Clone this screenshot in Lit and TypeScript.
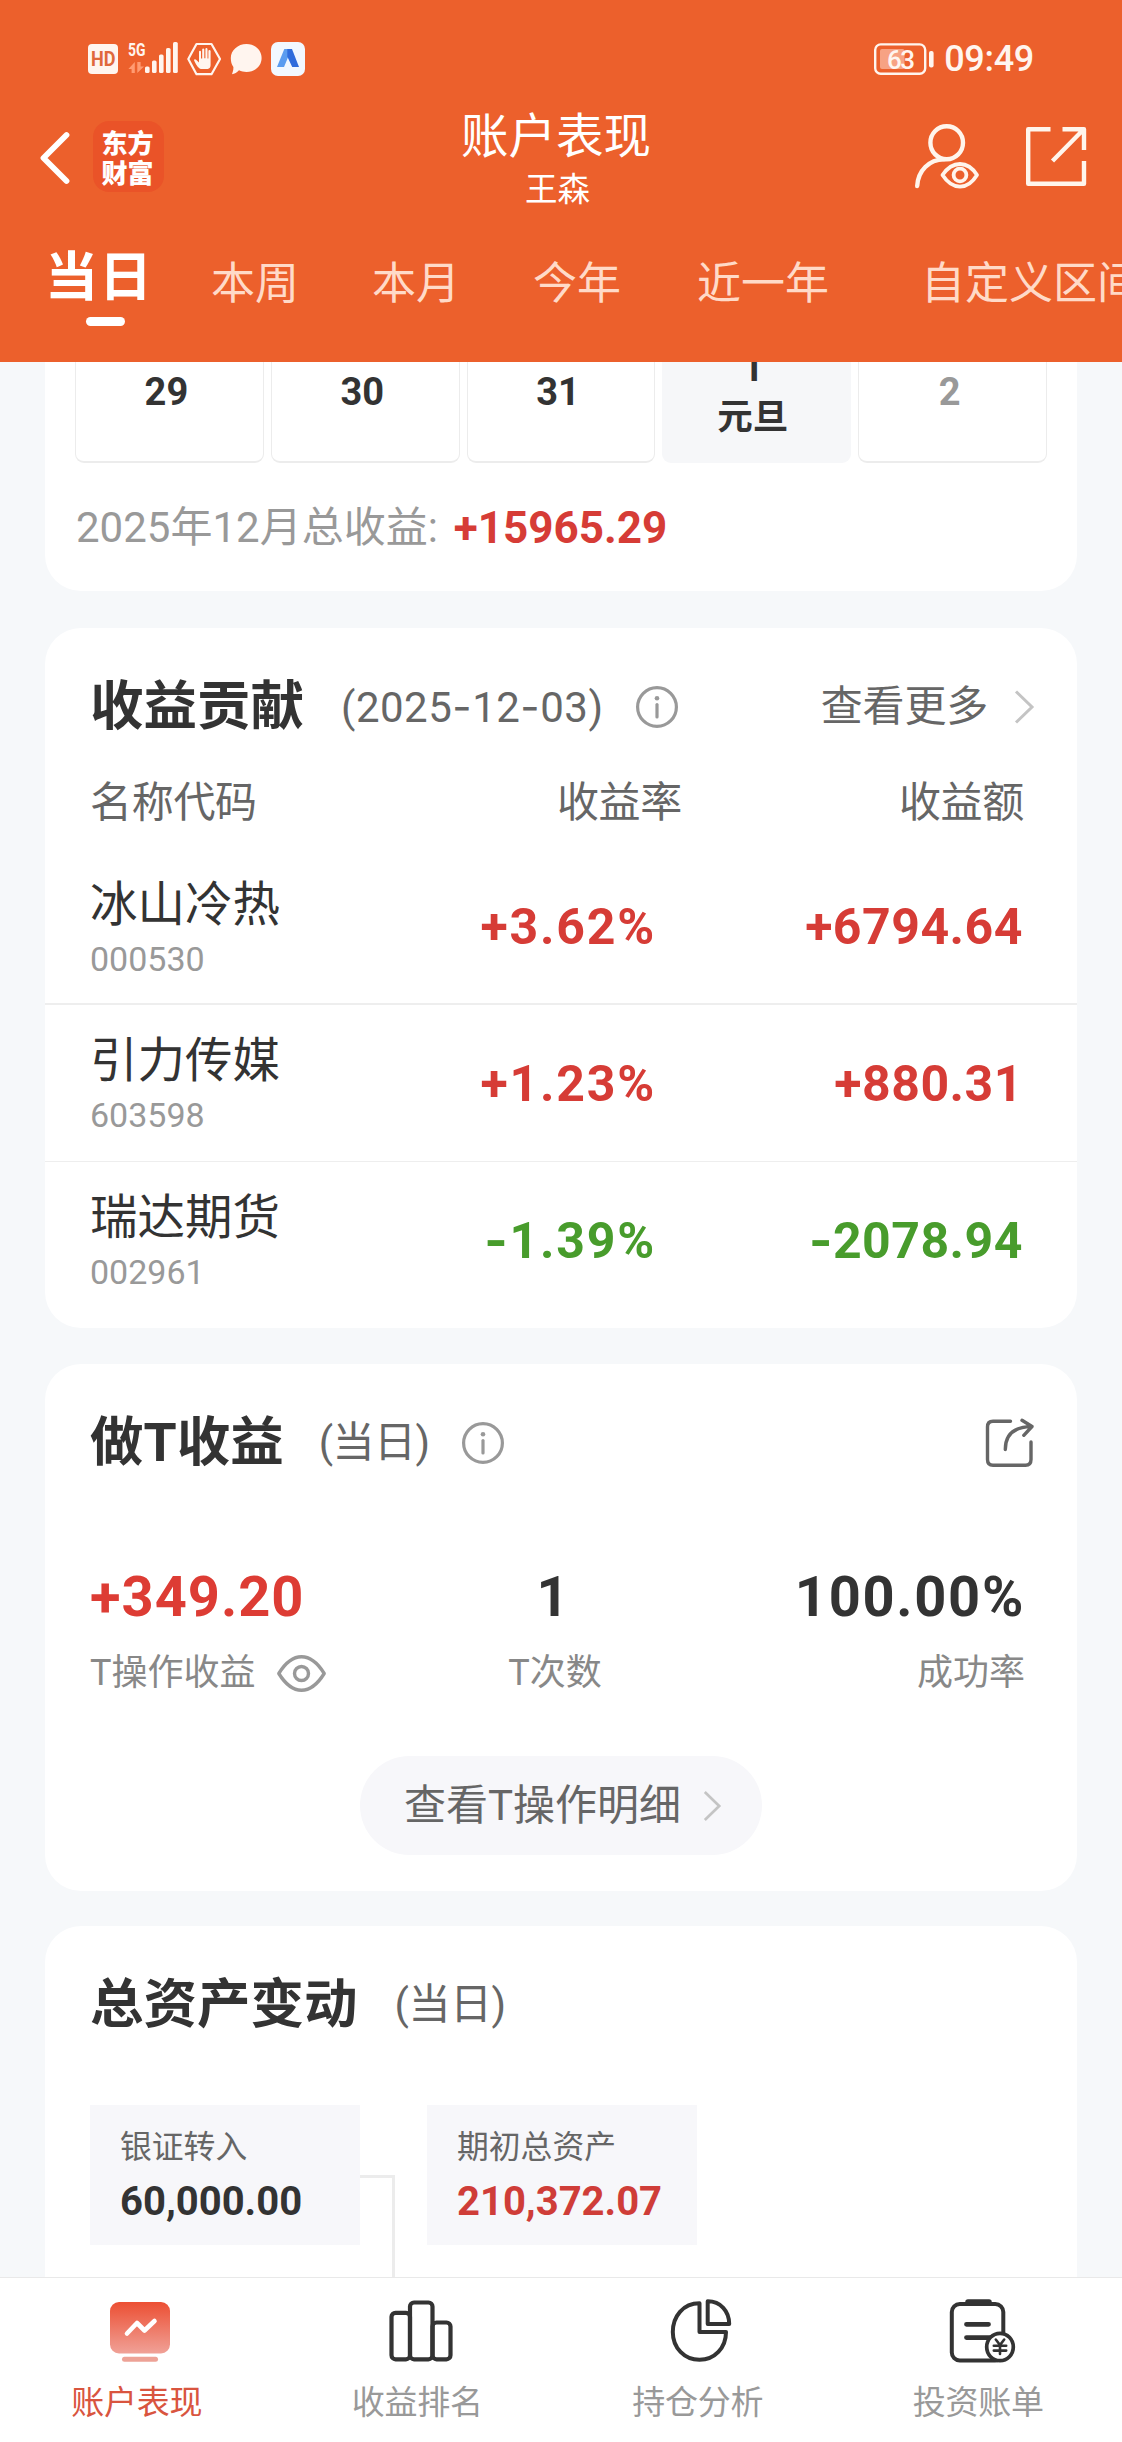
import { LitElement, html, svg, css } from "lit";
import { customElement } from "lit/decorators.js";
import { classMap } from "lit/directives/class-map.js";

const shared = css`
  * { box-sizing: border-box; }
  svg { display: block; flex: none; overflow: visible; }
  .hy { font-family: Inter, sans-serif; }
`;

const infoIcon = html`<svg width="42" height="42" viewBox="0 0 42 42" fill="none" stroke="#999" stroke-width="3.2">
  <circle cx="21" cy="21" r="19.4"></circle>
  <path d="M21 18.5V31" stroke-linecap="round"></path>
  <circle cx="21" cy="12.2" r="2.3" fill="#999" stroke="none"></circle>
</svg>`;

const chevron = html`<svg width="20" height="34" viewBox="0 0 20 34" fill="none" stroke="#c4c4c4" stroke-width="3">
  <path d="M2 1.5L18 17L2 32.5"></path>
</svg>`;

// Hyphens are set in a face whose dash is as wide as the figures around it.
const dashed = (s: string) =>
  s.split(/(-)/).map((p) => (p === "-" ? html`<span class="hy">-</span>` : p));

@customElement("status-bar")
class StatusBar extends LitElement {
  static styles = [shared, css`
    :host { display: flex; align-items: center; height: 118px; padding: 0 88px; font-family: Roboto, sans-serif; color: #fff5ef; }
    .left, .right { display: flex; align-items: center; }
    .right { margin-left: auto; }
    .time { font-size: 36px; line-height: 40px; font-weight: 500; letter-spacing: -0.3px; margin-left: 10px; }
    .t { font-family: Roboto, sans-serif; }
  `];
  render() {
    return html`
      <div class="left">
        <svg width="218" height="40" viewBox="88 39 218 40">
          <rect x="88" y="44" width="30" height="30" rx="4" fill="#fff5ef"></rect>
          <text class="t" x="91" y="66.2" font-size="20" font-weight="700" textLength="24.5" lengthAdjust="spacingAndGlyphs" fill="#e0683c">HD</text>
          <text class="t" x="128" y="56" font-size="18.5" font-weight="700" textLength="17.5" lengthAdjust="spacingAndGlyphs" fill="#fff5ef">5G</text>
          <path d="M134.8 73V62L128.4 69H131.6V73ZM137.3 62V73L144 66.4H140.6V62Z" fill="#ff9b72"></path>
          <g fill="#fff5ef">
            <rect x="145" y="66.5" width="4.6" height="6.5" rx="1.6"></rect>
            <rect x="152" y="60.5" width="4.6" height="12.5" rx="1.6"></rect>
            <rect x="159" y="54.5" width="4.6" height="18.5" rx="1.6"></rect>
            <rect x="166" y="48" width="4.6" height="25" rx="1.6"></rect>
            <rect x="173" y="42" width="4.8" height="31" rx="1.6"></rect>
          </g>
          <path d="M196.5 44H211.5L220 59L211.5 74.2H196.5L188.3 59Z" fill="none" stroke="#fff5ef" stroke-width="2.2" stroke-linejoin="round"></path>
          <path d="M199.6 68.6C196.8 66.5 195 62.6 194.1 60.5C194 59.2 195.3 59 196.4 60L199 62.6V51.8Q199 50.8 200 50.8T201 51.8V58.4H202.2V49.5Q202.2 48.4 203.2 48.4T204.3 49.5V58.2H205.4V49.2Q205.4 48.1 206.4 48.1T207.5 49.2V58.4H208.4V51Q208.4 50 209.4 50T210.6 51V65Q210.6 68.6 207.6 68.9H200.8Z" fill="#fff5ef"></path>
          <path d="M246.5 44C255.3 44 261.6 50.4 261.6 58C261.6 66 255 72 246.5 72C243.8 72 241.3 71.4 239 70.3C237 72.5 234.6 73.8 232 74.2C232.8 72 233.5 70 233.4 67C231.6 64.6 230.8 61.5 230.8 58C230.8 50.4 237.8 44 246.5 44Z" fill="#fff5ef"></path>
          <rect x="271" y="42" width="34" height="34" rx="7" fill="#f2f8ff"></rect>
          <path d="M277 67L284.3 49H291.5L284 67Z" fill="#5a9cf0"></path>
          <path d="M287.3 49H292L299 67H292.2L287.3 56.5Z" fill="#2f6cdc"></path>
        </svg>
      </div>
      <div class="right">
        <svg width="60" height="32" viewBox="874 42 60 32">
          <rect x="875.2" y="43.4" width="50" height="29.4" rx="5.5" fill="none" stroke="#fff5ef" stroke-width="2.4"></rect>
          <rect x="880" y="48" width="24.5" height="20" rx="2" fill="#f7a283"></rect>
          <rect x="929" y="50" width="4.6" height="16.5" rx="2" fill="#fff5ef"></rect>
          <text class="t" x="901" y="67.6" font-size="26" font-weight="500" text-anchor="middle" textLength="28" fill="#fff5ef">63</text>
        </svg>
        <span class="time">09:49</span>
      </div>`;
  }
}

@customElement("page-header")
class PageHeader extends LitElement {
  static styles = [shared, css`
    :host { display: flex; flex-direction: column; height: 362px; background: #ec602c; color: #fff; overflow: hidden; flex: none; }
    .bar { display: grid; grid-template-columns: 1fr auto 1fr; height: 96px; align-items: start; padding: 0 35px 0 39px; }
    .side { display: flex; align-items: center; }
    .back { margin-top: 5px; }
    .logo { margin-left: 22px; margin-top: 3px; width: 71px; height: 71px; border-radius: 16px; background: #ea5328; display: flex; flex-direction: column; align-items: center; justify-content: center;
      font: 900 26px/30px "Noto Sans CJK SC", sans-serif; padding-right: 2px; }
    .titles { text-align: center; padding-right: 14px; }
    .title { font-size: 47.5px; line-height: 50px; margin-top: -6px; }
    .name { font-size: 32.5px; line-height: 40px; margin-top: 8px; padding-left: 3px; }
    .actions { justify-content: flex-end; gap: 48px; padding-top: 5px; }
    .tabs { display: flex; align-items: flex-start; white-space: nowrap; padding-left: 45px; margin-top: 31px; font-size: 44px; color: #ffdac8; }
    .tab { line-height: 60px; margin-top: 9px; margin-right: 73px; }
    .tab.last3 { margin-right: 92px; }
    .tab.pre { margin-right: 76px; }
    .active { display: flex; flex-direction: column; align-items: center; margin-top: 0; margin-right: 58px; color: #fff; font-weight: 700; font-size: 53px; letter-spacing: 1px; line-height: 66px; }
    .active i { width: 39px; height: 9px; border-radius: 5px; background: #fff; margin: 6px 0 0 12px; }
  `];
  render() {
    return html`
      <status-bar></status-bar>
      <div class="bar">
        <div class="side">
          <svg class="back" width="32" height="60" viewBox="40 127 32 60" fill="none" stroke="#fff" stroke-width="5.8" stroke-linecap="round" stroke-linejoin="round"><path d="M67.5 134L44.5 157L67.5 180"></path></svg>
          <div class="logo"><span>东方</span><span>财富</span></div>
        </div>
        <div class="titles">
          <div class="title">账户表现</div>
          <div class="name">王森</div>
        </div>
        <div class="side actions">
          <svg width="66" height="66" viewBox="914 123 66 66" fill="none" stroke="#fff5ec" stroke-width="4.4" stroke-linecap="round">
            <ellipse cx="947.7" cy="142.7" rx="16.3" ry="16.5"></ellipse>
            <path d="M918.2 186C919 171 930 159.4 945 159.4"></path>
            <path d="M943.5 175Q951 164 961 164T978 175Q971 186.6 961 186.6T943.5 175Z" stroke-width="3.8" stroke-linejoin="round"></path>
            <circle cx="961" cy="175" r="6.4" stroke-width="3.8"></circle>
          </svg>
          <svg width="60" height="60" viewBox="1027 126 60 60" fill="none" stroke="#fff5ec" stroke-width="4.4" stroke-linejoin="round">
            <path d="M1050.5 129.2H1028.2V183.8H1084V161M1062.5 129.2H1084V150M1083 130L1052.5 161"></path>
          </svg>
        </div>
      </div>
      <div class="tabs">
        <div class="tab active"><span>当日</span><i></i></div>
        <div class="tab">本周</div>
        <div class="tab">本月</div>
        <div class="tab pre">今年</div>
        <div class="tab last3">近一年</div>
        <div class="tab">自定义区间</div>
      </div>`;
  }
}

const DAYS = [
  { n: "29" }, { n: "30" }, { n: "31" }, { n: "1", label: "元旦", rest: true }, { n: "2", dim: true },
];

@customElement("calendar-card")
class CalendarCard extends LitElement {
  static styles = [shared, css`
    :host { display: block; height: 229px; background: #fff; border-radius: 0 0 36px 36px; padding: 0 30px; }
    .week { display: grid; grid-template-columns: repeat(5, 1fr); gap: 7px; height: 101px; }
    .day { border: 1px solid #ececec; border-width: 0 1px 2px; border-radius: 0 0 9px 9px; text-align: center; color: #333; font-weight: 700; font-size: 38px; line-height: 44px; padding: 8px 6px 0 0; overflow: hidden; }
    .rest { background: #f6f7f9; border-color: #f6f7f9; padding: 0 8px 0 0; }
    .rest .num { margin-top: -16px; }
    .label { font-size: 35.5px; line-height: 54px; }
    .dim { color: #999; }
    .sum { display: flex; align-items: center; height: 60px; line-height: 60px; margin-top: 35px; padding-left: 1px; font-size: 42px; color: #999; }
    .sum b { color: #d63c36; font-size: 44px; margin-left: 16px; }
  `];
  render() {
    return html`
      <div class="week">${DAYS.map((d: any) => html`
        <div class=${classMap({ day: true, rest: !!d.rest, dim: !!d.dim })}>
          <div class="num">${d.n}</div>${d.label ? html`<div class="label">${d.label}</div>` : ""}
        </div>`)}
      </div>
      <div class="sum"><span>2025年12月总收益:</span><b>+15965.29</b></div>`;
  }
}

const STOCKS = [
  { name: "冰山冷热", code: "000530", rate: "+3.62%", amount: "+6794.64", up: true },
  { name: "引力传媒", code: "603598", rate: "+1.23%", amount: "+880.31", up: true },
  { name: "瑞达期货", code: "002961", rate: "-1.39%", amount: "-2078.94", up: false },
];

const heading = css`
  .head { display: flex; align-items: center; height: 60px; line-height: 60px; }
  .h { font-size: 53.5px; font-weight: 700; color: #333; }
  .sub { font-size: 42px; color: #666; margin-left: 37px; }
  .head .info { margin-left: 32px; }
`;

@customElement("contribution-card")
class ContributionCard extends LitElement {
  static styles = [shared, heading, css`
    :host { display: block; height: 700px; background: #fff; border-radius: 36px; padding-top: 49px; }
    .head { padding: 0 43px 0 45px; }
    .date { letter-spacing: 0.5px; margin-left: 37px; }
    .more { display: flex; align-items: center; margin-left: auto; gap: 26px; font-size: 42px; color: #666; letter-spacing: -0.2px; }
    .cols, .row { display: grid; grid-template-columns: 300px 1fr 1fr; padding: 0 53px 0 45px; }
    .cols { height: 60px; margin-top: 36px; line-height: 60px; font-size: 42px; color: #666; letter-spacing: -0.3px; }
    .cols span + span { text-align: right; }
    .cols .mid { width: 292px; padding-right: 0; }
    .rows { margin-top: 16px; }
    .row { height: 156px; align-items: center; border-bottom: 2px solid #eee; }
    .row + .row { border-bottom-width: 1px; height: 156.5px; }
    .row:last-child { border: 0; }
    .who { padding-top: 7px; }
    .name { font-size: 47.5px; line-height: 58px; color: #333; }
    .code { font-size: 34px; line-height: 50px; color: #999; }
    .num { font-size: 50px; line-height: 60px; font-weight: 700; text-align: right; color: #d63c36; padding-top: 2px; }
    .end { letter-spacing: 0.5px; padding-right: 1px; }
    .mid { justify-self: start; }
    .row .mid { width: 272px; padding-right: 6px; letter-spacing: 1.8px; }
    .down { color: #489c2c; }
  `];
  render() {
    return html`
      <div class="head"><span class="h">收益贡献</span><span class="sub date">${dashed("(2025-12-03)")}</span><span class="info">${infoIcon}</span>
        <span class="more">查看更多${chevron}</span></div>
      <div class="cols"><span>名称代码</span><span class="mid">收益率</span><span>收益额</span></div>
      <div class="rows">${STOCKS.map((s) => html`
        <div class="row">
          <div class="who"><div class="name">${s.name}</div><div class="code">${s.code}</div></div>
          <div class=${classMap({ num: true, mid: true, down: !s.up })}>${dashed(s.rate)}</div>
          <div class=${classMap({ num: true, end: true, down: !s.up })}>${dashed(s.amount)}</div>
        </div>`)}
      </div>`;
  }
}

@customElement("t-profit-card")
class TProfitCard extends LitElement {
  static styles = [shared, heading, css`
    :host { display: flex; flex-direction: column; height: 527px; background: #fff; border-radius: 36px; padding: 49px 43px 0 45px; }
    .sub { letter-spacing: -0.5px; margin-left: 35px; }
    .share { margin-left: auto; }
    .stats { display: grid; grid-template-columns: 1fr 1fr 1fr; margin-top: 91px; padding-right: 9px; }
    .stats > div:nth-child(2) { text-align: center; padding-right: 5px; }
    .stats > div:nth-child(3) { text-align: right; }
    .v { font-size: 56px; line-height: 66px; font-weight: 700; color: #333; letter-spacing: 1px; }
    .one { padding-right: 4px; }
    .pct { letter-spacing: 1.7px; }
    .up { color: #dd3c34; }
    .l { display: flex; align-items: center; height: 50px; line-height: 50px; margin-top: 18px; font-size: 36px; color: #888; }
    .l svg { margin-left: 22px; }
    .c { justify-content: center; }
    .e { justify-content: flex-end; }
    .btn { align-self: center; display: flex; align-items: center; gap: 22px; width: 402px; height: 99px; line-height: 99px; margin: 58px 0 0 -2px; padding-left: 44px; border-radius: 50px; background: #f7f7fa; font-size: 42px; color: #666; }
    .btn svg { width: 18px; height: 32px; }
  `];
  render() {
    return html`
      <div class="head"><span class="h">做T收益</span><span class="sub">(当日)</span><span class="info">${infoIcon}</span>
        <svg class="share" width="48" height="50" viewBox="986 1417 48 50" fill="none" stroke="#666" stroke-width="3.4" stroke-linecap="round" stroke-linejoin="round">
          <path d="M1010.5 1420.3H993Q987.5 1420.3 987.5 1426V1458.5Q987.5 1464.3 993 1464.3H1025.5Q1031 1464.3 1031 1458.500V1441"></path>
          <path d="M1005.300 1448.500C1005.300 1434 1013 1426 1031 1425.600M1022 1419.300L1032 1425.500L1023.800 1434.300"></path>
        </svg></div>
      <div class="stats">
        <div><div class="v up">+349.20</div><div class="l">T操作收益
          <svg width="49" height="37" viewBox="0 0 49 37" fill="none" stroke="#999" stroke-width="3.4" stroke-linejoin="round">
            <path d="M1.800 18.500C8 8.500 15.500 1.800 24.500 1.800S41 8.500 47.200 18.500C41 28.500 33.500 35.200 24.500 35.200S8 28.500 1.800 18.500Z"></path><circle cx="24.500" cy="18.500" r="7"></circle></svg></div></div>
        <div><div class="v one">1</div><div class="l c">T次数</div></div>
        <div><div class="v pct">100.00%</div><div class="l e">成功率</div></div>
      </div>
      <div class="btn"><span>查看T操作明细</span>${chevron}</div>`;
  }
}

@customElement("asset-card")
class AssetCard extends LitElement {
  static styles = [shared, heading, css`
    :host { display: block; height: 600px; background: #fff; border-radius: 36px; padding: 49px 45px 0; }
    .sub { letter-spacing: -0.5px; }
    .flow { display: flex; align-items: flex-start; margin-top: 70px; }
    .box { width: 270px; height: 140px; background: #f7f7fa; padding: 20px 0 0 30px; }
    .l { font-size: 31.8px; line-height: 44px; color: #666; }
    .v { font-size: 40px; font-weight: 700; line-height: 50px; margin-top: 8px; color: #333; }
    .up { color: #cf3d38; }
    .link { width: 35px; height: 300px; margin: 70px 32px 0 0; border: 3px solid #ececec; border-width: 3px 3px 0 0; }
  `];
  render() {
    return html`
      <div class="head"><span class="h">总资产变动</span><span class="sub">(当日)</span></div>
      <div class="flow">
        <div class="box"><div class="l">银证转入</div><div class="v">60,000.00</div></div>
        <div class="link"></div>
        <div class="box"><div class="l">期初总资产</div><div class="v up">210,372.07</div></div>
      </div>`;
  }
}

const NAV = [
  { label: "账户表现", on: true, icon: svg`
    <defs><linearGradient id="g" x1="0" y1="0" x2="0" y2="1"><stop offset="0" stop-color="#ec4f33"></stop><stop offset="1" stop-color="#f0a197"></stop></linearGradient></defs>
    <rect x="5" y="5" width="60" height="51.500" rx="9" fill="url(#g)"></rect>
    <path d="M22 36.500L32 26L39.500 33.500L49.500 24" fill="none" stroke="#fff" stroke-width="4.600" stroke-linecap="round" stroke-linejoin="round"></path>
    <rect x="17" y="59.800" width="36" height="5" rx="2.500" fill="#eda296"></rect>` },
  { label: "收益排名", icon: svg`
    <g fill="none" stroke="#333" stroke-width="4.200">
      <rect x="5.500" y="15.800" width="18.500" height="46.500" rx="4"></rect>
      <rect x="24" y="5.500" width="22.500" height="56.800" rx="4"></rect>
      <rect x="46.500" y="25.500" width="18" height="36.800" rx="4"></rect></g>` },
  { label: "持仓分析", icon: svg`
    <g fill="none" stroke="#333" stroke-width="4" stroke-linejoin="round">
      <path d="M33.500 6.300C17 6.300 6.800 19.500 6.800 35C6.800 51 18.500 62.800 33.500 62.800C48.500 62.800 60 51 60 35H33.500Z"></path>
      <path d="M41.700 4.300V27H63.200C63.200 14 54.500 4.300 41.700 4.300Z"></path></g>` },
  { label: "投资账单", icon: svg`
    <g fill="none" stroke="#333" stroke-width="4" stroke-linecap="round">
      <rect x="4.800" y="7" width="51.500" height="56.500" rx="8"></rect>
      <path d="M21 5H42" stroke-width="5.500"></path>
      <path d="M19.500 27.300H41.500M19.500 40.600H44" stroke-width="4.800"></path>
      <ellipse cx="53" cy="50" rx="13.300" ry="13.700" fill="#fff" stroke-width="3.700"></ellipse>
      <path d="M48.800 42.500L53 48L57.200 42.500M53 48V57M46.800 48.700H59.200M46.800 53.600H59.200" stroke-width="2.600"></path></g>` },
];

@customElement("bottom-nav")
class BottomNav extends LitElement {
  static styles = [shared, css`
    :host { display: grid; grid-template-columns: repeat(4, 1fr); flex: none; height: 165px; background: #fff; border-top: 1px solid #e9e9e9; }
    .item { display: flex; flex-direction: column; align-items: center; padding-top: 19px; }
    .label { font-size: 33px; line-height: 44px; color: #999; margin: 14px 7px 0 0; letter-spacing: -0.2px; }
    .on { color: #d9553f; }
  `];
  render() {
    return html`${NAV.map((n) => html`
      <div class="item"><svg width="70" height="70" viewBox="0 0 70 70">${n.icon}</svg>
        <div class=${classMap({ label: true, on: !!n.on })}>${n.label}</div></div>`)}`;
  }
}

@customElement("app-root")
class AppRoot extends LitElement {
  static styles = [shared, css`
    :host { display: flex; flex-direction: column; width: 1122px; height: 2442px; overflow: hidden; background: #f6f8fa; font-family: Roboto, "Noto Sans CJK SC", sans-serif; white-space: nowrap; }
    main { flex: 1; min-height: 0; overflow: hidden; padding: 0 45px; display: flex; flex-direction: column; }
    main > * { flex: none; }
    contribution-card { margin-top: 37px; }
    t-profit-card { margin-top: 36px; }
    asset-card { margin-top: 35px; }
  `];
  render() {
    return html`
      <page-header></page-header>
      <main>
        <calendar-card></calendar-card>
        <contribution-card></contribution-card>
        <t-profit-card></t-profit-card>
        <asset-card></asset-card>
      </main>
      <bottom-nav></bottom-nav>`;
  }
}
